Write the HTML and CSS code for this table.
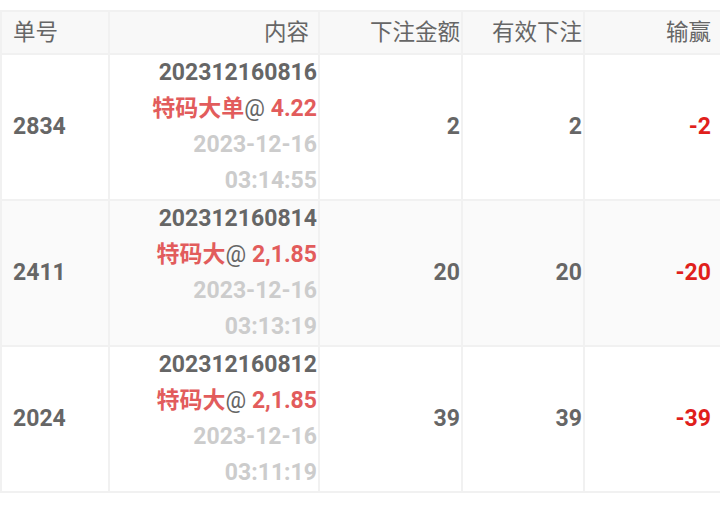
FILE: index.html
```html
<!DOCTYPE html>
<html lang="zh">
<head>
<meta charset="utf-8">
<link rel="stylesheet" href="styles.css">
</head>
<body>
<div class="page">
<table class="bets">
  <colgroup>
    <col class="c1"><col class="c2"><col class="c3"><col class="c4"><col class="c5">
  </colgroup>
  <thead>
    <tr><th class="left">单号</th><th class="pad">内容</th><th class="tight">下注金额</th><th class="tight">有效下注</th><th class="pad">输赢</th></tr>
  </thead>
  <tbody>
    <tr>
      <td class="left">2834</td>
      <td class="tight"><div>202312160816</div><div><span class="red">特码大单</span><span class="at">@</span> <span class="red">4.22</span></div><div class="muted">2023-12-16</div><div class="muted">03:14:55</div></td>
      <td class="tight">2</td><td class="tight">2</td><td class="loss pad">-2</td>
    </tr>
    <tr class="alt">
      <td class="left">2411</td>
      <td class="tight"><div>202312160814</div><div><span class="red">特码大</span><span class="at">@</span> <span class="red">2,1.85</span></div><div class="muted">2023-12-16</div><div class="muted">03:13:19</div></td>
      <td class="tight">20</td><td class="tight">20</td><td class="loss pad">-20</td>
    </tr>
    <tr>
      <td class="left">2024</td>
      <td class="tight"><div>202312160812</div><div><span class="red">特码大</span><span class="at">@</span> <span class="red">2,1.85</span></div><div class="muted">2023-12-16</div><div class="muted">03:11:19</div></td>
      <td class="tight">39</td><td class="tight">39</td><td class="loss pad">-39</td>
    </tr>
  </tbody>
</table>
</div>
</body>
</html>
```
FILE: styles.css
```css
html, body { margin: 0; padding: 0; background: #fff; }
body { font-family: Roboto, "Noto Sans CJK SC", sans-serif; color: #666; }
.page { padding-top: 10px; }
.bets { width: 720px; border-collapse: collapse; table-layout: fixed; }
.c1 { width: 108px; } .c2 { width: 210px; } .c3 { width: 143px; } .c4 { width: 122px; } .c5 { width: 137px; }
.bets th, .bets td { border: 2px solid #f1f1f1; padding: 0 9px 0 11px; text-align: right; }
.bets th { background: #f8f8f8; font-weight: 400; font-size: 22.5px; height: 41px; line-height: 41px; color: #666; }
.bets td { font-size: 23px; font-weight: 700; line-height: 36px; vertical-align: middle; color: #666; }
.bets .tight { padding-right: 1px; }
.bets .pad { padding-right: 9px; }
.bets .left { text-align: left; }
.bets tr.alt td { background: #fafafa; }
.red { color: #e25c5c; }
.at { color: #666; font-weight: 400; }
.muted { color: #cccccc; }
.bets td.loss { color: #e0201b; }
```
